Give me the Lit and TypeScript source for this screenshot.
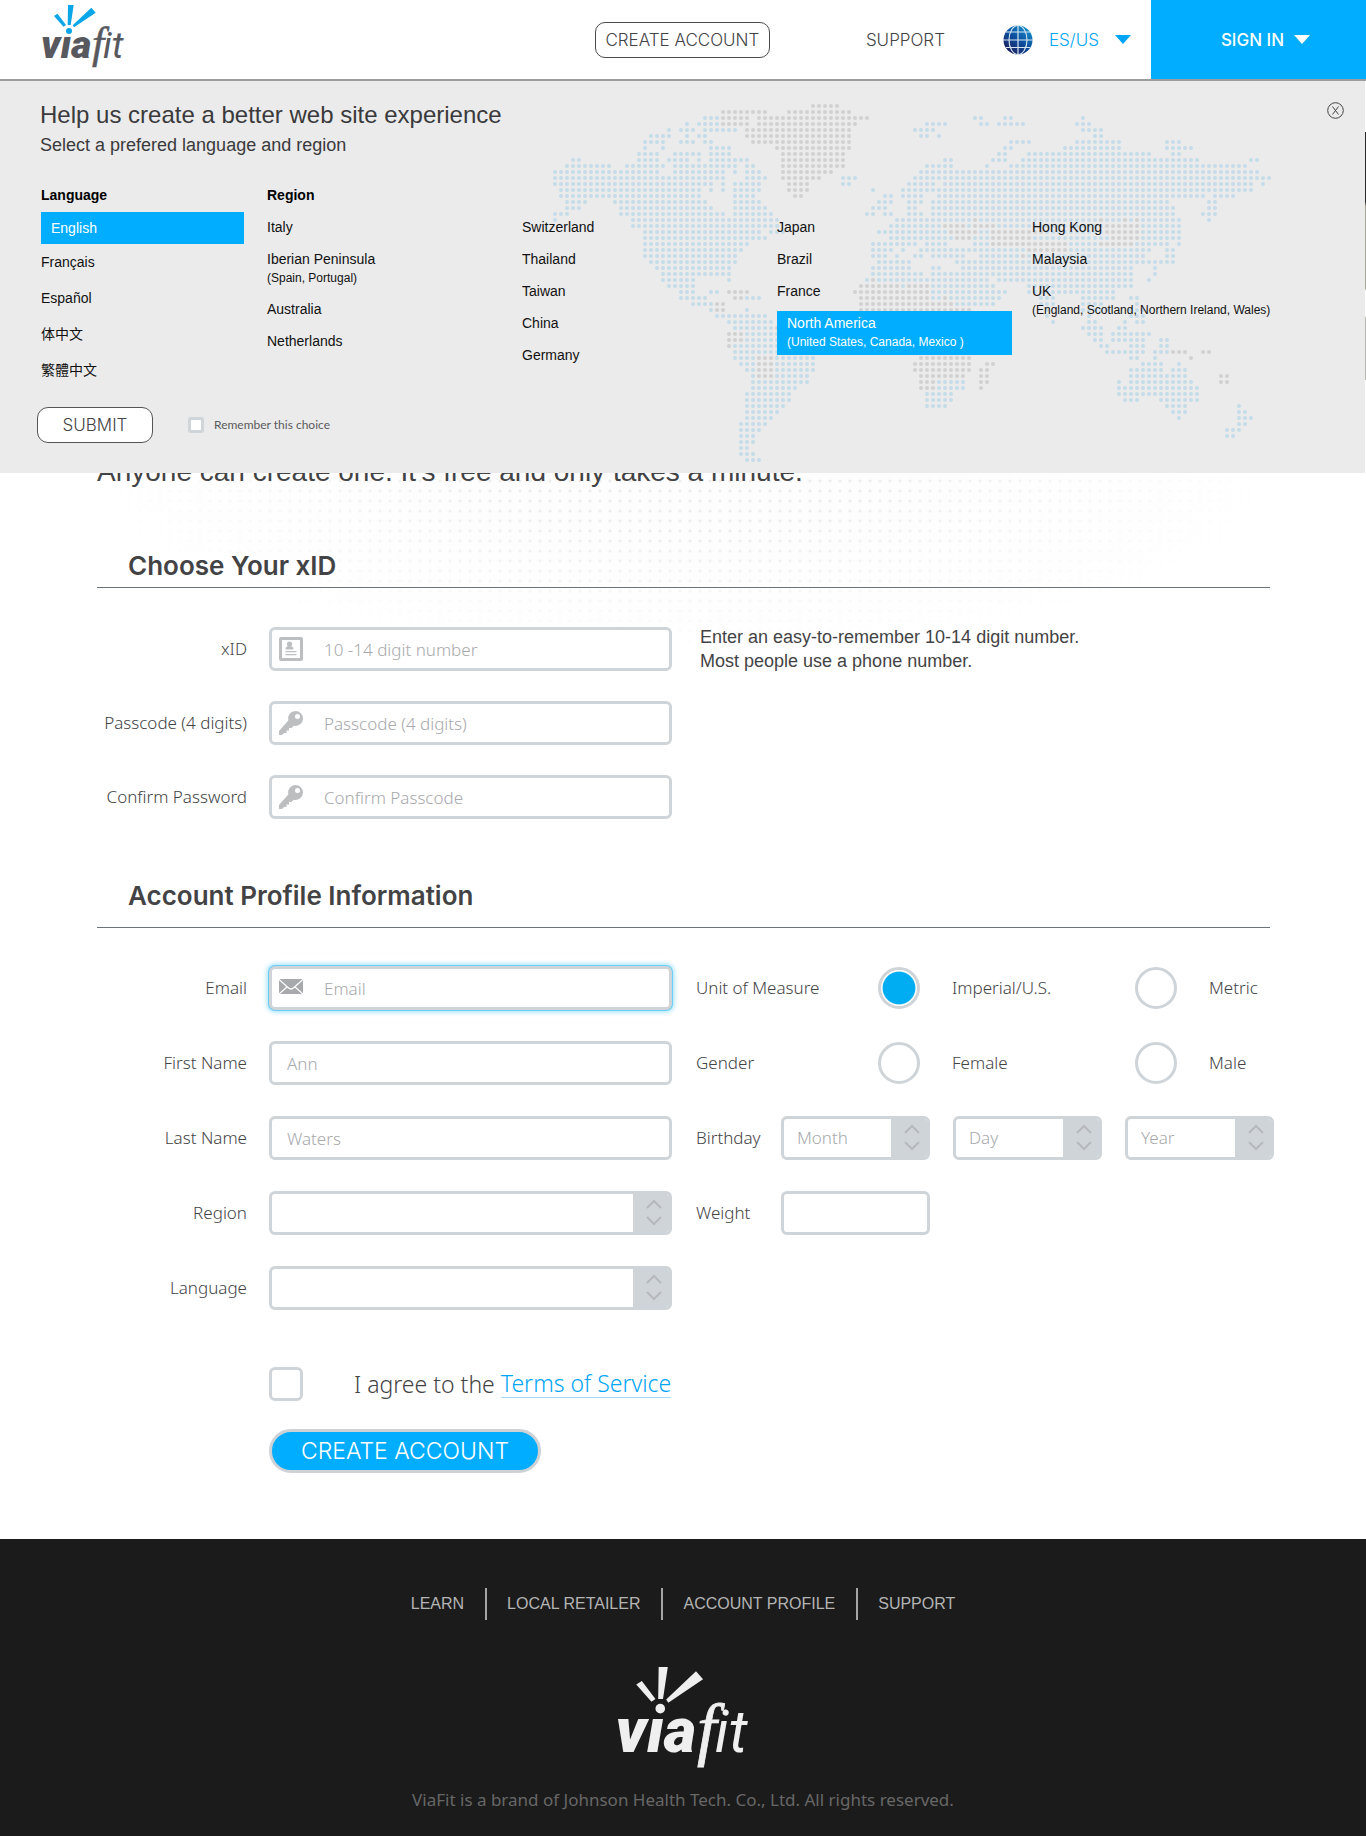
import { LitElement, html, svg, css, nothing } from "lit";
import { customElement, property } from "lit/decorators.js";

/* World map rows: column ranges on a 120 x 60 dot grid. */
const BLUE_ROWS = [
  "", "", "25-27 70-71 75-76 88", "22 24-27 62-65 71-72 74-78 87-89",
  "19 21-23 25-30 60-63 88-91", "16-19 22 24-25 61-62 64 90-91",
  "15-18 21-23 25-26 76-79 87-94 102-104", "15 18 26-29 75-76 85-94 102-106",
  "14-17 20-24 26-29 74-75 79-99 103-104", "3-4 14-17 19-22 24 26-32 65-66 73-75 78-107 116-117",
  "2-9 12-18 20-30 32-33 62-66 72 76-115", "0-17 20-28 30 32-34 61-117",
  "0-28 32-35 48-50 60-119", "0-26 28 30-34 48-49 59-63 65-116 118",
  "1-24 26 28 30-34 53 58-116", "1-24 30-33 55-56 58-61 64-108 110-113",
  "2-5 10-25 30-34 54-56 59-61 63-102 109-110", "2-4 11-26 30-35 53-55 59-60 63-103 109-110",
  "0-2 11-28 30-36 52-53 55-56 59-61 63-103 108-110", "0 13-37 57-69 71-90 92-94 96 98-104 109",
  "13-37 56-64 69 74-91 98-104", "15-34 36-38 54-65 71-72 82-91 98-104",
  "15-35 56-66 70-72 80-92 98-104", "15-32 53-60 62-65 70-72 86-90 97-102 104",
  "15-31 53-56 58 61-78 86-99 102-103", "15-30 53-55 57 60-61 63-68 71-77 79-98 102-103",
  "16-30 54-59 67-98 99-103", "17-29 53-59 63-64 68-96 100", "18-29 53-61 63-96 100",
  "18-23 29 52 54-72 74-96 99", "19-23 58 63-73 79-96", "21-23 26-27 63-75 79-93",
  "21-25 32-34 63-64 66-74 81-83 88-93 96-97", "23-26 67-73 81-83 88-91 97",
  "26 32 82 88-92 96-98", "27-35 82 89 96-98", "29-36 83 89-90 95 97-98", "30-36 88-91 94-95",
  "32-37 89-91 93-99", "32-37 90-91 93-98 101-102", "30-37 91-92 96-98 101-102",
  "30-43 92-98 100-102", "30-33 37-43 96-97 100", "31-33 37-43 98-101 104",
  "32-33 37-43 96-101 103-105", "33 37-42 96-105", "33-42 64-68 94 96-106", "33-40 64-68 94-107",
  "32-39 62-66 94-107", "32-39 62-66 95-97 101-107", "32-38 62-65 102-105 114",
  "32-37 103-105 114-115", "32-36 104 114-116", "31-35 114-115", "31-34 112-114",
  "31-33 112-113", "31-33", "31-32", "31-33", "32-34",
];
const GREY_ROWS = [
  "43-47", "28-35 39-47 48-49", "28-32 34-52", "28-32 34-50", "32-49", "32-49", "33-49", "37-49",
  "38-48", "38-48", "38-48", "38-46", "38-44", "39-42", "39-42", "40-41", "", "", "",
  "70 91 95 97", "65-68 70-73 92-97", "66-70 73-81 92-97", "67-69 73-79 93-97", "73-85 91-96",
  "79-85", "78", "", "", "", "53", "51-57 59-62", "29-32 50-62", "30-31 51-62 65", "27-28 51-66",
  "27-28 51-69", "", "", "37", "29-31", "29-31", "29", "103-105 108-109",
  "34-36 61-69 106", "34-36 60-69 72-73", "34-36 60-69 71-72", "34-36 61-68 71-72 111-112",
  "61-63 71-72 111-112", "61-63 71",
];
const dots = (rows: string[]) =>
  rows.map((row, y) =>
    row.split(" ").filter(Boolean).map((range) => {
      const [from, to = from] = range.split("-").map(Number);
      let d = "";
      for (let x = from; x <= to; x++) d += `M${x * 6 + 3} ${y * 6 + 3}h0`;
      return d;
    }).join("")).join("");
const BLUE = dots(BLUE_ROWS);
const GREY = dots(GREY_ROWS);

const icons: Record<string, unknown> = {
  card: svg`<path fill-rule="evenodd" d="M2 0h20a2 2 0 0 1 2 2v20a2 2 0 0 1-2 2H2a2 2 0 0 1-2-2V2a2 2 0 0 1 2-2zM3 3v18h18V3z"/><circle cx="10.500" cy="7" r="2.600"/><path d="M6.500 12.500c0-2.500 1.500-3.500 4-3.500s4 1 4 3.500zM6.500 14h11v1.300h-11zM6.500 17h11v1.300h-11z"/>`,
  key: svg`<path fill-rule="evenodd" d="M16.500 0A7.500 7.500 0 0 1 24 7.500a7.500 7.500 0 0 1-9.300 7.200L12.500 17H10v2.500H7.500V22H5l-2 2H0v-4L9.300 9.500A7.500 7.500 0 0 1 16.500 0zM18.500 3a2.500 2.500 0 1 0 0 5 2.500 2.500 0 0 0 0-5z"/>`,
  mail: svg`<rect y="3" width="24" height="15" rx="1"/><path d="M0 3.500l9 8c2 2 4 2 6 0l9-8M0 18l8.500-7.500M24 18l-8.500-7.500" fill="none" stroke="#fff" stroke-width="1.200"/>`,
};

@customElement("via-logo")
export class ViaLogo extends LitElement {
  static styles = css`
    :host { display: block; aspect-ratio: 83 / 63; }
    svg { display: block; width: 100%; height: 100%; overflow: visible; }
    .word { fill: var(--logo-word, #58585f); stroke: var(--logo-word, #58585f); stroke-width: 0; }
    .spark { fill: var(--logo-spark, #0aa6e8); }
    .via { font: italic 900 39px Roboto, sans-serif; }
    .f { font: italic 400 44px "Liberation Serif", serif; stroke-width: 0.5; }
    .it { font: italic 400 37px Roboto, sans-serif; }
  `;
  render() {
    return html`<svg viewBox="0 0 83 63" role="img" aria-label="viafit">
      <g class="spark">
        <path d="M12 11l3.500-2.300L24 20l-2.500 1.700zM26 0h5.700l-3 20h-3zM49.300 2.700l4.400 5L32 22.300l-1.300-2z"/>
        <circle cx="27" cy="26" r="3"/>
      </g>
      <g class="word">
        <text class="via" x="-1" y="53">vıa</text>
        <text class="f" x="50" y="53">f</text>
        <text class="it" x="61" y="53">it</text>
      </g>
    </svg>`;
  }
}

const base = css`
  * { box-sizing: border-box; }
  label, .label { color: #434345; }
  .box {
    display: flex; align-items: center; height: 44px; background: #fff;
    border: 3px solid #cfd4d8; border-radius: 6px; overflow: hidden;
  }
  input, select {
    flex: 1; min-width: 0; height: 100%; border: 0; padding: 0; outline: 0; background: none;
    font: inherit; color: #a7a9ac; border-radius: 0; appearance: none;
  }
  input::placeholder { color: #a7a9ac; opacity: 1; }
`;

@customElement("text-field")
export class TextField extends LitElement {
  @property() label = "";
  @property() placeholder = "";
  @property() value = "";
  @property() icon = "";
  @property() type = "text";
  @property({ type: Boolean }) active = false;
  static styles = [base, css`
    :host { display: grid; grid-template-columns: 150px minmax(0, 1fr); column-gap: 22px; align-items: center; }
    :host([compact]) { grid-template-columns: 85px 149px; column-gap: 0; }
    label { text-align: right; }
    :host([compact]) label { text-align: left; }
    .active { box-shadow: 0 0 0 1px #6bcff6, 0 0 5px 2px #9ddff9; }
    svg { width: 24px; height: 24px; margin-left: 7px; fill: #bcbec0; flex: none; }
    .plain { padding-left: 15px; }
    .iconed { padding-left: 21px; }
    .active svg { fill: #a7a9ac; }
  `];
  render() {
    return html`<label for="f">${this.label}</label>
      <div class="box ${this.active ? "active" : ""}">
        ${this.icon ? html`<svg viewBox="0 0 24 24" aria-hidden="true">${icons[this.icon]}</svg>` : nothing}
        <input id="f" class=${this.icon ? "iconed" : "plain"} type=${this.type}
          placeholder=${this.placeholder} .value=${this.value}>
      </div>`;
  }
}

@customElement("select-field")
export class SelectField extends LitElement {
  @property() label = "";
  @property() option = "";
  static styles = [base, css`
    :host { display: grid; grid-template-columns: 150px minmax(0, 1fr); column-gap: 22px; align-items: center; }
    :host([bare]) { display: block; width: 149px; }
    label { text-align: right; }
    select { padding-left: 13px; }
    svg { width: 36px; height: 38px; background: #cfd4d8; flex: none; }
  `];
  render() {
    const bare = this.hasAttribute("bare");
    return html`${bare ? nothing : html`<label for="s">${this.label}</label>`}
      <div class="box">
        <select id="s" aria-label=${bare ? this.label : nothing}><option>${this.option}</option></select>
        <svg viewBox="0 0 36 38" fill="none" stroke="#b6b9bc" stroke-width="2" aria-hidden="true">
          <path d="M14 14l7-7 7 7M14 23l7 7 7-7"/>
        </svg>
      </div>`;
  }
}

interface Region { name: string; note?: string; selected?: boolean; }
const REGIONS: Region[][] = [
  [{ name: "Italy" }, { name: "Iberian Peninsula", note: "(Spain, Portugal)" }, { name: "Australia" }, { name: "Netherlands" }],
  [{ name: "Switzerland" }, { name: "Thailand" }, { name: "Taiwan" }, { name: "China" }, { name: "Germany" }],
  [{ name: "Japan" }, { name: "Brazil" }, { name: "France" }, { name: "North America", note: "(United States, Canada, Mexico )", selected: true }],
  [{ name: "Hong Kong" }, { name: "Malaysia" }, { name: "UK", note: "(England, Scotland, Northern Ireland, Wales)" }],
];
const LANGUAGES = ["English", "Français", "Español", "体中文", "繁體中文"];

@customElement("locale-panel")
export class LocalePanel extends LitElement {
  static styles = css`
    * { box-sizing: border-box; }
    :host {
      display: block; background: #ebebeb; color: #111; padding: 17px 30px 30px 40px;
      font: 14px/18px "Liberation Sans", "Noto Sans CJK SC", sans-serif;
    }
    .map { position: absolute; top: 22px; right: 93px; width: 720px; height: 360px; fill: none; stroke-width: 4; stroke-linecap: round; }
    .blue { stroke: #c5dce9; }
    .grey { stroke: #d1d1d1; }
    .body { position: relative; }
    .top { display: flex; justify-content: space-between; align-items: start; }
    h2 { margin: 0; font-size: 24px; line-height: 34px; font-weight: 400; color: #3a3a3c; }
    .sub { margin: 0; font-size: 18px; line-height: 26px; color: #3a3a3c; }
    .close { border: 0; padding: 0; background: none; width: 17px; height: 17px; margin: 4px -9px 0 0; }
    .close svg { display: block; width: 17px; height: 17px; fill: none; stroke: #444; }
    .cols { display: grid; grid-template-columns: 203px repeat(3, 232px) 1fr; column-gap: 23px; margin: 28px 0 0 1px; }
    h3 { margin: 0 0 8px; font-size: 14px; line-height: 18px; font-weight: 700; color: #000; }
    ul { list-style: none; margin: 0; padding: 0; }
    button { font: inherit; color: inherit; border: 0; padding: 0; background: none; text-align: left; display: block; }
    .lang { width: 100%; height: 36px; }
    .lang.on { height: 32px; padding-left: 10px; background: #00adff; color: #fff; }
    .region { padding-bottom: 14px; margin-top: 0; }
    .regions { padding-top: 6px; }
    .regions.offset { margin-top: 26px; }
    .region span { display: block; }
    .region .note { font-size: 12px; line-height: 20px; margin-bottom: -2px; white-space: nowrap; }
    .region.on { background: #00adff; color: #fff; margin-top: -3px; padding: 3px 10px 5px; width: 235px; }
    .foot { display: flex; align-items: center; margin: 19px 0 0 -3px; }
    .submit {
      width: 116px; height: 36px; border: 1px solid #555; border-radius: 11px; background: #fff;
      font: 300 17px/34px Inter, sans-serif; color: #434345; text-align: center;
    }
    .foot label { display: flex; align-items: center; gap: 10px; margin-left: 35px; font: 12px/16px Lato, sans-serif; color: #5a5a5c; }
    .tick { appearance: none; margin: 0; width: 16px; height: 16px; background: #fff; border: 3px solid #cfd5d9; border-radius: 3px; }
  `;
  render() {
    return html`
      <svg class="map" viewBox="0 0 720 360" aria-hidden="true">
        <path class="blue" d=${BLUE}/><path class="grey" d=${GREY}/>
      </svg>
      <div class="body">
        <div class="top">
          <div>
            <h2>Help us create a better web site experience</h2>
            <p class="sub">Select a prefered language and region</p>
          </div>
          <button class="close" aria-label="Close">
            <svg viewBox="0 0 17 17"><circle cx="8.500" cy="8.500" r="7.800"/><path d="M5.500 4.500l6 8M11.500 4.500l-6 8"/></svg>
          </button>
        </div>
        <div class="cols">
          <div>
            <h3>Language</h3>
            <ul>${LANGUAGES.map((l, i) => html`<li><button class="lang ${i === 0 ? "on" : ""}">${l}</button></li>`)}</ul>
          </div>
          ${REGIONS.map((col, i) => html`<div>
            ${i === 0 ? html`<h3>Region</h3>` : nothing}
            <ul class="regions ${i ? "offset" : ""}">${col.map((r) => html`<li><button class="region ${r.selected ? "on" : ""}">
              <span>${r.name}</span>${r.note ? html`<span class="note">${r.note}</span>` : nothing}
            </button></li>`)}</ul>
          </div>`)}
        </div>
        <div class="foot">
          <button class="submit">SUBMIT</button>
          <label><input class="tick" type="checkbox">Remember this choice</label>
        </div>
      </div>`;
  }
}

@customElement("app-root")
export class AppRoot extends LitElement {
  static styles = css`
    * { box-sizing: border-box; }
    :host {
      display: block; background: #fff; color: #434345;
      font: 300 17px/24px "Noto Sans", "Noto Sans CJK SC", sans-serif;
    }
    a { color: inherit; text-decoration: none; }
    header {
      position: relative; z-index: 1; display: flex; align-items: center; height: 81px; padding-left: 42px;
      border-bottom: 2px solid #9c9c9c; background: #fff; font-family: Inter, sans-serif;
    }
    .brand { width: 83px; margin: 0 auto 6px 0; }
    .create {
      width: 175px; height: 36px; border: 1px solid #4b4b4d; border-radius: 10px; background: #fff;
      font: inherit; color: #434345; padding: 0; margin-right: 96px;
    }
    .support { margin-right: 58px; }
    .locale { display: flex; align-items: center; border: 0; padding: 0; background: none; font: inherit; color: #00a5f5; gap: 16px; margin-right: 20px; }
    .globe { width: 30px; height: 30px; }
    .caret { width: 16px; height: 9px; fill: currentColor; }
    .signin {
      display: flex; align-items: center; justify-content: center; gap: 10px; align-self: stretch; width: 215px;
      border: 0; background: #00adff; color: #fff; font: inherit; font-weight: 500; padding: 0 0 0 14px;
    }
    locale-panel { position: absolute; top: 81px; left: 0; right: 1px; }
    main {
      padding: 51px 0 66px;
      background:
        radial-gradient(ellipse 600px 175px at 50% 400px, transparent 0, transparent 30%, #fff 100%),
        radial-gradient(circle at center, #ededed 0, #ededed 1px, transparent 2px) 5px 5px / 10px 10px,
        #fdfdfd;
    }
    .hero { height: 248px; background: linear-gradient(#2b2b2b 28%, #a8a591 30% 63%, #fff 64% 74%, #b9b9b5 75%); }
    .page { padding: 74px 96px 0 97px; }
    .intro { margin: 0 0 60px; font: 28px/36px "Liberation Sans", sans-serif; }
    h2 { margin: 0 0 39px; padding: 0 0 5px 31px; border-bottom: 1px solid #6b7478; font: 600 26px/32px Inter, sans-serif; }
    h2.profile { margin: 61px 0 38px; padding-bottom: 15px; }
    .fields { display: grid; grid-template-columns: minmax(0, 575px) minmax(0, 1fr); column-gap: 24px; align-items: center; row-gap: 30px; }
    .wide { row-gap: 31px; margin-right: -5px; }
    .help { margin: -2px 0 -2px 4px; font: 18px/24px "Liberation Sans", sans-serif; color: #434345; }
    .choice { display: grid; grid-template-columns: 182px 257px auto; align-items: center; justify-content: start; }
    .choice label { display: flex; align-items: center; gap: 32px; }
    .radio {
      appearance: none; margin: 0; width: 42px; height: 42px; border-radius: 50%; flex: none;
      border: 3px solid #cfd4d8; background: #fff;
    }
    .radio:checked { background: radial-gradient(circle closest-side, #00adf2 88%, #fff 94%); }
    .birthday { display: grid; grid-template-columns: 85px auto; align-items: center; justify-content: start; }
    .dates { display: flex; gap: 23px; }
    .agree { display: flex; align-items: center; margin: 57px 0 28px 172px; font-size: 23px; line-height: 34px; }
    .tick { appearance: none; margin: 0 51px 0 0; width: 34px; height: 34px; border: 3px solid #cfd4d8; border-radius: 6px; background: #fff; }
    .agree a { color: #00a5f5; line-height: 27px; border-bottom: 1px solid #a4dcf8; margin-left: 6px; }
    .go {
      display: block; width: 272px; height: 44px; margin-left: 172px; border: 3px solid #ced2d5; border-radius: 22px;
      background: #00adff; color: #fff; font: 300 23px/38px Inter, sans-serif; padding: 0;
    }
    footer { background: #1b1b1b; color: #b4b4b4; padding: 49px 20px 24px; display: flex; flex-direction: column; align-items: center; }
    nav { display: flex; font: 16px/32px "Liberation Sans", sans-serif; }
    nav a + a { margin-left: 21px; padding-left: 20px; border-left: 2px solid #a5a5a5; }
    footer via-logo { width: 133px; margin: 47px 0 20px; --logo-word: #efefef; --logo-spark: #efefef; }
    .legal { margin: 0; color: #676767; font-weight: 400; }
  `;
  private caret = html`<svg class="caret" viewBox="0 0 16 9" aria-hidden="true"><path d="M0 0h16L8 9z"/></svg>`;
  render() {
    return html`
      <header>
        <via-logo class="brand"></via-logo>
        <button class="create">CREATE ACCOUNT</button>
        <a class="support" href="#support">SUPPORT</a>
        <button class="locale">
          <svg class="globe" viewBox="0 0 30 30" aria-hidden="true">
            <defs><linearGradient id="sea" x1="1" y1="0" x2="0.300" y2="1">
              <stop offset="0" stop-color="#18a3d8"/><stop offset="0.550" stop-color="#0c4fa0"/><stop offset="1" stop-color="#1c1f5e"/>
            </linearGradient></defs>
            <circle cx="15" cy="15" r="14.500" fill="url(#sea)"/>
            <g fill="none" stroke="#d5e4ef" stroke-width="1.200">
              <path d="M15 0v30M3 7h24M0 15h30M3 22.500h24"/><ellipse cx="15" cy="15" rx="9" ry="14.500"/>
            </g>
          </svg>
          <span>ES/US</span>${this.caret}
        </button>
        <button class="signin">SIGN IN ${this.caret}</button>
        <locale-panel></locale-panel>
      </header>
      <main>
        <div class="hero"></div>
        <form class="page" @submit=${(e: Event) => e.preventDefault()}>
          <p class="intro">Anyone can create one. It's free and only takes a minute.</p>
          <h2>Choose Your xID</h2>
          <div class="fields">
            <text-field label="xID" icon="card" placeholder="10 -14 digit number"></text-field>
            <p class="help">Enter an easy-to-remember 10-14 digit number.<br>Most people use a phone number.</p>
            <text-field label="Passcode (4 digits)" icon="key" type="password" placeholder="Passcode (4 digits)"></text-field><span></span>
            <text-field label="Confirm Password" icon="key" type="password" placeholder="Confirm Passcode"></text-field>
          </div>
          <h2 class="profile">Account Profile Information</h2>
          <div class="fields wide">
            <text-field label="Email" icon="mail" placeholder="Email" active></text-field>
            <div class="choice" role="radiogroup" aria-label="Unit of Measure">
              <span>Unit of Measure</span>
              <label><input class="radio" type="radio" name="unit" checked>Imperial/U.S.</label>
              <label><input class="radio" type="radio" name="unit">Metric</label>
            </div>
            <text-field label="First Name" value="Ann"></text-field>
            <div class="choice" role="radiogroup" aria-label="Gender">
              <span>Gender</span>
              <label><input class="radio" type="radio" name="gender">Female</label>
              <label><input class="radio" type="radio" name="gender">Male</label>
            </div>
            <text-field label="Last Name" value="Waters"></text-field>
            <div class="birthday">
              <span>Birthday</span>
              <div class="dates">
                <select-field bare label="Month" option="Month"></select-field>
                <select-field bare label="Day" option="Day"></select-field>
                <select-field bare label="Year" option="Year"></select-field>
              </div>
            </div>
            <select-field label="Region"></select-field>
            <text-field compact label="Weight"></text-field>
            <select-field label="Language"></select-field>
          </div>
          <div class="agree">
            <input class="tick" id="agree" type="checkbox">
            <label for="agree">I agree to the</label><a href="#terms">Terms of Service</a>
          </div>
          <button class="go">CREATE ACCOUNT</button>
        </form>
      </main>
      <footer>
        <nav>
          <a href="#learn">LEARN</a><a href="#retailer">LOCAL RETAILER</a><a href="#profile">ACCOUNT PROFILE</a><a href="#support">SUPPORT</a>
        </nav>
        <via-logo></via-logo>
        <p class="legal">ViaFit is a brand of Johnson Health Tech. Co., Ltd. All rights reserved.</p>
      </footer>`;
  }
}
